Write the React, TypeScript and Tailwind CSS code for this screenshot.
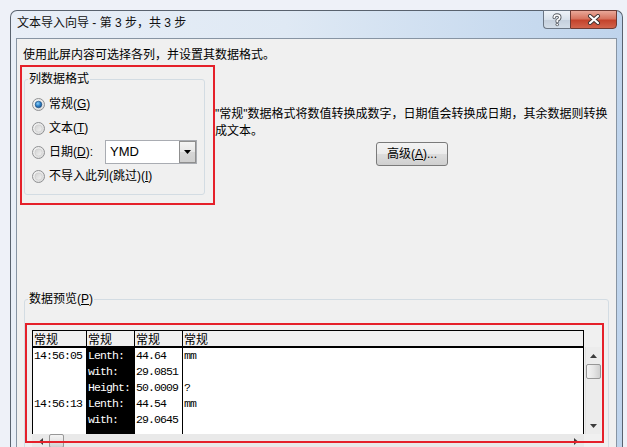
import React from "react";

function Radio({ on }: { on?: boolean }) {
  return (
    <svg width="13" height="13" viewBox="0 0 13 13" className="shrink-0">
      <defs>
        <linearGradient id="rOuter" x1="0" y1="0" x2="1" y2="1">
          <stop offset="0" stopColor="#f6f6f6" />
          <stop offset="1" stopColor="#d8d8d8" />
        </linearGradient>
        <linearGradient id="rInner" x1="0" y1="0" x2="1" y2="1">
          <stop offset="0" stopColor="#d0d0d0" />
          <stop offset="1" stopColor="#f4f4f4" />
        </linearGradient>
        <radialGradient id="rBlue" cx="0.4" cy="0.35" r="0.7">
          <stop offset="0" stopColor="#8ed0f8" />
          <stop offset="0.55" stopColor="#2b7fc6" />
          <stop offset="1" stopColor="#1a4e85" />
        </radialGradient>
      </defs>
      <circle cx="6.5" cy="6.5" r="6" fill="url(#rOuter)" stroke="#8f9092" />
      {on ? (
        <circle cx="6.5" cy="6.5" r="3.3" fill="url(#rBlue)" stroke="#1d4c7c" strokeWidth="0.6" />
      ) : (
        <circle cx="6.5" cy="6.5" r="3.6" fill="url(#rInner)" stroke="#c4c4c4" strokeWidth="0.5" />
      )}
    </svg>
  );
}

function Row({ cells, dark }: { cells: string[]; dark?: boolean }) {
  return (
    <div className={dark ? "flex flex-col bg-black text-white border-r border-black" : "flex flex-col border-r border-black"}>
      {cells.map((c, i) => (
        <div key={i} className="h-[16px] leading-[16px] pl-[1px] whitespace-pre">
          {c}
        </div>
      ))}
    </div>
  );
}

export default function App() {
  return (
    <div className="w-[627px] h-[447px] overflow-hidden bg-[#eef1f8] pl-[10px] pt-[10px] text-[12px] text-black font-['Liberation_Sans','Noto_Sans_CJK_SC',sans-serif]">
      <div className="w-[613px] h-[440px] flex flex-col rounded-t-[7px] border-x border-t border-[#59626e] bg-[linear-gradient(90deg,#e8eef7_0%,#dfe9f4_45%,#c9dbef_80%,#bfd4ec_100%)]">
        {/* title bar */}
        <div className="h-[27px] flex items-start shrink-0">
          <div className="pl-[6px] pt-[4px] leading-[16px] whitespace-nowrap text-[#111]">
            文本导入向导 - 第 3 步，共 3 步
          </div>
          <div className="flex-1" />
          <div className="flex -mt-px mr-[5px]">
            <div className="w-[27px] h-[19px] border border-r-0 border-[#6b7684] rounded-bl-[4px] bg-[linear-gradient(180deg,#eef3f9_0%,#d9e2ec_50%,#c4cfdc_51%,#d3dde8_100%)] flex items-center justify-center">
              <svg width="12" height="14" viewBox="0 0 12 14">
                <path d="M3.2 4.6 Q3.2 2 6 2 Q8.8 2 8.8 4.4 Q8.8 6 6.2 7.2 L6.2 8.8" fill="none" stroke="#5a5f66" strokeWidth="3.4" strokeLinecap="round" strokeLinejoin="round" />
                <path d="M3.2 4.6 Q3.2 2 6 2 Q8.8 2 8.8 4.4 Q8.8 6 6.2 7.2 L6.2 8.8" fill="none" stroke="#fff" strokeWidth="1.6" strokeLinecap="round" strokeLinejoin="round" />
                <circle cx="6.2" cy="11.6" r="1.7" fill="#5a5f66" />
                <circle cx="6.2" cy="11.6" r="0.9" fill="#fff" />
              </svg>
            </div>
            <div className="w-[47px] h-[19px] border border-[#6e3a33] rounded-br-[4px] bg-[linear-gradient(180deg,#e9a899_0%,#d7745f_45%,#c4432c_55%,#d2644c_100%)] flex items-center justify-center">
              <svg width="14" height="11" viewBox="0 0 14 11">
                <path d="M3 2 L11 9 M11 2 L3 9" stroke="#3d3230" strokeWidth="4" strokeLinecap="round" />
                <path d="M3 2 L11 9 M11 2 L3 9" stroke="#fff" strokeWidth="2.2" strokeLinecap="round" />
              </svg>
            </div>
          </div>
        </div>

        {/* client area */}
        <div className="mx-[5px] flex-1 border border-[#8794a3] bg-[#f0f0f0] flex flex-col">
          <div className="pl-[6px] pt-[8px] leading-[16px] whitespace-nowrap">
            使用此屏内容可选择各列，并设置其数据格式。
          </div>

          <div className="flex mt-[2px] pl-[3px]">
            <div className="w-[195px] h-[140px] shrink-0 border-2 border-[#e5202a] pl-[2px] pt-[4px]">
              <fieldset className="w-[181px] h-[124px] border border-[#d3dce3] rounded-[3px] p-0 m-0">
                <legend className="ml-[3px] px-[1px] leading-[16px]">列数据格式</legend>
                <div className="pl-[7px] pt-[5px] flex flex-col">
                  <div className="h-[24px] flex items-center">
                    <Radio on />
                    <span className="ml-[4px]">
                      常规(<u>G</u>)
                    </span>
                  </div>
                  <div className="h-[24px] flex items-center">
                    <Radio />
                    <span className="ml-[4px]">
                      文本(<u>T</u>)
                    </span>
                  </div>
                  <div className="h-[24px] flex items-center">
                    <Radio />
                    <span className="ml-[4px] w-[56px]">
                      日期(<u>D</u>):
                    </span>
                    <div className="w-[92px] h-[24px] border border-[#a9acb2] bg-white flex items-center">
                      <span className="pl-[4px] flex-1 text-[13px]">YMD</span>
                      <div className="w-[17px] h-[22px] border border-[#8f8f8f] bg-[linear-gradient(180deg,#f4f4f4_0%,#e6e6e6_50%,#d6d6d6_51%,#cfcfcf_100%)] flex items-center justify-center">
                        <svg width="7" height="4" viewBox="0 0 7 4">
                          <path d="M0 0 H7 L3.5 4 Z" fill="#000" />
                        </svg>
                      </div>
                    </div>
                  </div>
                  <div className="h-[24px] flex items-center">
                    <Radio />
                    <span className="ml-[4px]">
                      不导入此列(跳过)(<u>I</u>)
                    </span>
                  </div>
                </div>
              </fieldset>
            </div>

            <div className="flex-1 pt-[41px] leading-[17px] flex flex-col items-start">
              <div className="whitespace-nowrap">
                "常规"数据格式将数值转换成数字，日期值会转换成日期，其余数据则转换
                <br />
                成文本。
              </div>
              <button className="ml-[161px] mt-[2px] w-[72px] h-[24px] border border-[#7a7a7a] rounded-[3px] bg-[linear-gradient(180deg,#f3f3f3_0%,#ebebeb_50%,#dddddd_51%,#cfcfcf_100%)] leading-[20px]">
                高级(<u>A</u>)...
              </button>
            </div>
          </div>

          <fieldset className="ml-[7px] mt-[86px] w-[585px] h-[200px] border border-[#d3dce3] rounded-[3px] p-0 m-0 shrink-0">
            <legend className="ml-[3px] px-[1px] leading-[16px]">
              数据预览(<u>P</u>)
            </legend>
            <div className="relative">
              <div className="pl-[7px] pt-[23px]">
                <div className="flex">
                  <div className="w-[552px]">
                    <div className="grid grid-cols-[54px_48px_48px_1fr] h-[18px] border-x border-t border-b-2 border-black bg-[#f0f0f0] leading-[15px] font-['Noto_Sans_CJK_SC',sans-serif]">
                      <div className="border-r border-black pl-[1px]">常规</div>
                      <div className="border-r border-black pl-[1px]">常规</div>
                      <div className="border-r border-black pl-[1px]">常规</div>
                      <div className="pl-[1px]">常规</div>
                    </div>
                    <div className="grid grid-cols-[54px_48px_48px_1fr] h-[86px] border-x border-black bg-white text-[11.5px] tracking-[-0.9px] font-['Liberation_Mono',monospace]">
                      <Row cells={["14:56:05", "", "", "14:56:13", ""]} />
                      <Row dark cells={["Lenth:", "with:", "Height:", "Lenth:", "with:"]} />
                      <Row cells={["44.64", "29.0851", "50.0009", "44.54", "29.0645"]} />
                      <div className="flex flex-col">
                        {["mm", "", "?", "mm", ""].map((c, i) => (
                          <div key={i} className="h-[16px] leading-[16px] pl-[1px]">
                            {c}
                          </div>
                        ))}
                      </div>
                    </div>
                  </div>
                  <div className="w-[16px] ml-[1px] mt-[17px] h-[87px] bg-[#ececec] border-l border-[#e2e2e2] flex flex-col items-center">
                    <div className="h-[17px] flex items-center justify-center">
                      <svg width="7" height="4" viewBox="0 0 7 4">
                        <path d="M3.5 0 L7 4 H0 Z" fill="#3c3c3c" />
                      </svg>
                    </div>
                    <div className="w-[15px] h-[15px] border border-[#979797] rounded-[2px] bg-[linear-gradient(90deg,#f4f4f4_0%,#e6e6e6_50%,#cfcfcf_100%)]" />
                    <div className="flex-1" />
                    <div className="h-[17px] flex items-center justify-center">
                      <svg width="7" height="4" viewBox="0 0 7 4">
                        <path d="M0 0 H7 L3.5 4 Z" fill="#3c3c3c" />
                      </svg>
                    </div>
                  </div>
                </div>
                <div className="w-[552px] h-[14px] bg-[#e9e9e9] flex items-center">
                  <div className="w-[17px] flex items-center justify-center">
                    <svg width="4" height="7" viewBox="0 0 4 7">
                      <path d="M0 3.5 L4 0 V7 Z" fill="#3c3c3c" />
                    </svg>
                  </div>
                  <div className="w-[15px] h-[14px] border border-[#979797] rounded-[2px] bg-[linear-gradient(180deg,#f4f4f4_0%,#e6e6e6_50%,#cfcfcf_100%)]" />
                  <div className="flex-1" />
                  <div className="w-[17px] flex items-center justify-center">
                    <svg width="4" height="7" viewBox="0 0 4 7">
                      <path d="M0 0 L4 3.5 L0 7 Z" fill="#3c3c3c" />
                    </svg>
                  </div>
                </div>
              </div>
              <div className="absolute left-0 top-[16px] w-[579px] h-[120px] border-2 border-[#e5202a] pointer-events-none" />
            </div>
          </fieldset>
        </div>
      </div>
    </div>
  );
}
